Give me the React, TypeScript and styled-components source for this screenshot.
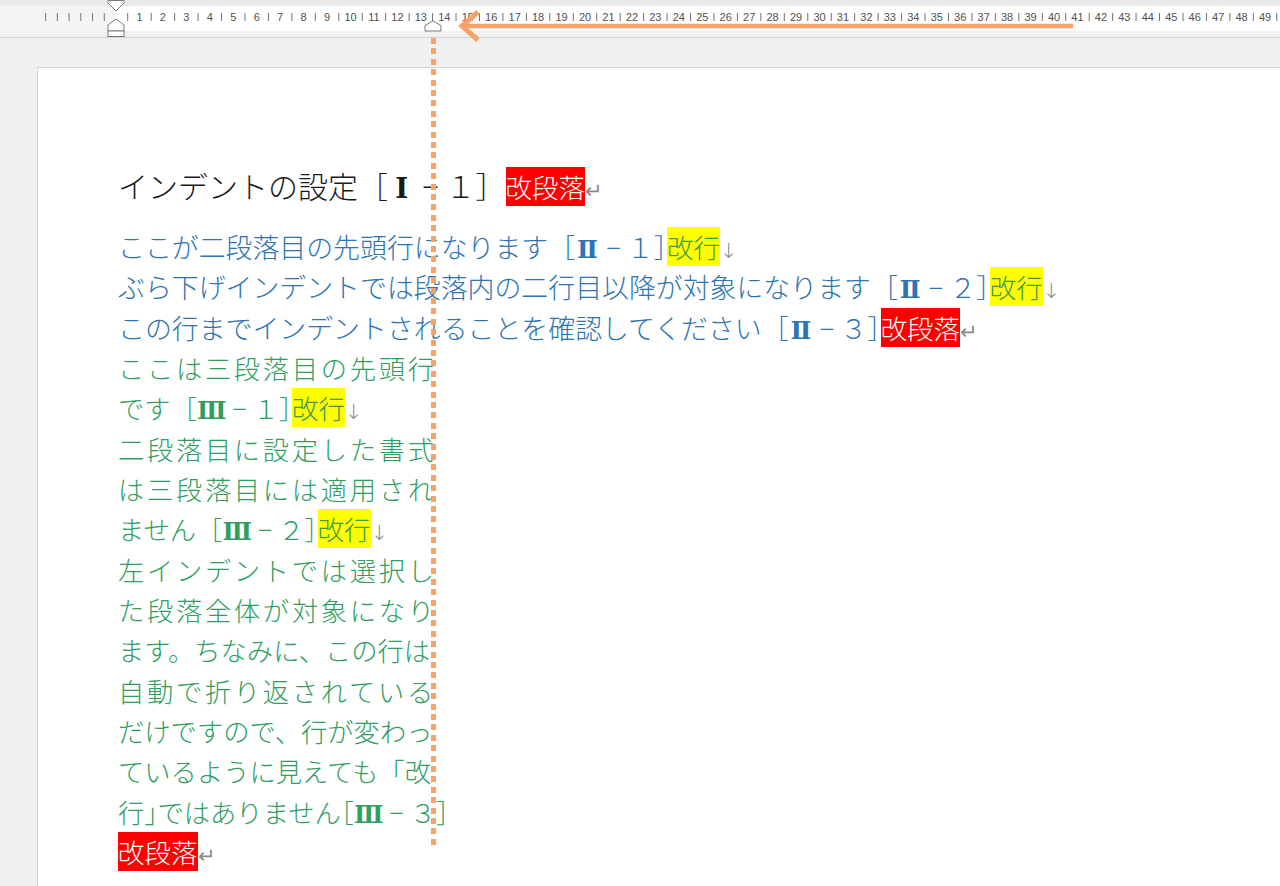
import styled, { createGlobalStyle } from "styled-components";

const ORIGIN = 116;
const UNIT = 23.45;
const ORANGE = "#f6a368";
const BLUE = "#2e74b5";
const GREEN = "#2f9e5f";

const GlobalStyle = createGlobalStyle`
  html, body {
    margin: 0;
    padding: 0;
    background: #f0f0f0;
    overflow: hidden;
  }
  body {
    font-family: "Noto Sans CJK JP", "Noto Sans", sans-serif;
  }
`;

const Frame = styled.div`
  position: relative;
  width: 1280px;
  height: 886px;
  overflow: hidden;
  background: #f0f0f0;
`;

const RulerBar = styled.div`
  height: 37px;
  border-bottom: 1px solid #d2d2d2;

  svg {
    display: block;
  }
`;

const Page = styled.div`
  margin: 29px 0 0 37px;
  min-height: 900px;
  background: #fff;
  border: 1px solid #d4d4d4;
  border-right: none;
  padding: 95px 0 0 80px;
  font-family: "Noto Sans CJK JP", "DejaVu Sans", sans-serif;
  font-weight: 300;
`;

const Heading = styled.div`
  font-size: 30px;
  height: 44px;
  line-height: 44px;
  color: #1b1b1b;
  white-space: nowrap;
  margin-bottom: 20px;
`;

const Line = styled.div<{ $size: number; $color: string; $spread?: number }>`
  font-size: ${(p) => p.$size}px;
  height: 40.33px;
  line-height: 40.33px;
  color: ${(p) => p.$color};
  letter-spacing: ${(p) => p.$spread ?? 0}px;
  white-space: nowrap;
`;

const Highlight = styled.span<{ $tone: "red" | "yellow" }>`
  background: ${(p) => (p.$tone === "red" ? "#ff0000" : "#ffff00")};
  color: ${(p) => (p.$tone === "red" ? "#ffffff" : "#3c9a48")};
  font-size: 26.5px;
  line-height: 1;
  letter-spacing: 0;
`;

const Mark = styled.span`
  font-family: "DejaVu Sans", sans-serif;
  font-size: 21px;
  line-height: 1;
  color: #8a8a8a;
  letter-spacing: 0;
`;

const Half = styled.span`
  font-feature-settings: "halt";
`;

const Cell = styled.span<{ $roman?: boolean }>`
  display: inline-block;
  min-width: 1em;
  text-align: center;
  line-height: 1;
  font-family: ${(p) =>
    p.$roman
      ? `"DejaVu Serif", "Noto Sans CJK JP", serif`
      : `"Noto Sans CJK JP", "DejaVu Sans", sans-serif`};
  font-weight: ${(p) => (p.$roman ? 700 : 300)};
  font-size: ${(p) => (p.$roman ? "0.92em" : "1em")};
`;

const IndentGuide = styled.div`
  position: absolute;
  left: 431px;
  top: 38px;
  width: 5px;
  height: 808px;
  background: repeating-linear-gradient(
    to bottom,
    ${ORANGE} 0,
    ${ORANGE} 6px,
    transparent 6px,
    transparent 10.4px
  );
`;

const ArrowLayer = styled.svg`
  position: absolute;
  left: 0;
  top: 0;
  pointer-events: none;
`;

const Ruler = () => {
  const numbers = Array.from({ length: 49 }, (_, i) => i + 1);
  const halves = Array.from({ length: 50 }, (_, i) => ORIGIN + (i + 0.5) * UNIT);
  const marginTicks = Array.from({ length: 6 }, (_, i) => ORIGIN - (i + 1) * (UNIT / 2));

  return (
    <svg width="1280" height="37" viewBox="0 0 1280 37">
      <rect x="0" y="0" width="1280" height="37" fill="#ebebeb" />
      <rect x="0" y="6" width="1280" height="25" fill="#ffffff" />
      <rect x="0" y="6" width={ORIGIN} height="25" fill="#f4f4f4" />
      <rect x="0" y="31" width="1280" height="6" fill="#f0f0f0" />

      {[...marginTicks, ...halves].map((x) => (
        <line key={x} x1={x} x2={x} y1="13" y2="21" stroke="#6f6f6f" strokeWidth="1" />
      ))}
      {numbers.map((n) => (
        <text
          key={n}
          x={ORIGIN + n * UNIT}
          y="21"
          fontSize="11"
          fontFamily="Liberation Sans, Arial, sans-serif"
          fill="#505050"
          textAnchor="middle"
        >
          {n}
        </text>
      ))}

      {/* first line / hanging / left indent */}
      <path d="M108 0.5 H124 V3 L116 11 L108 3 Z" fill="#fff" stroke="#7a7a7a" />
      <path d="M116 19 L124 25 V31 H108 V25 Z" fill="#fff" stroke="#7a7a7a" />
      <rect x="108" y="31" width="16" height="5.5" fill="#fff" stroke="#7a7a7a" />

      {/* right indent */}
      <path d="M433 21 L441 25.5 V31 H425 V25.5 Z" fill="#fff" stroke="#7a7a7a" />
    </svg>
  );
};

const Arrow = () => (
  <ArrowLayer width="1280" height="50" viewBox="0 0 1280 50">
    <line x1="466" y1="26" x2="1073" y2="26" stroke={ORANGE} strokeWidth="4.5" />
    <polyline
      points="478,12 462,26 478,40"
      fill="none"
      stroke={ORANGE}
      strokeWidth="5"
      strokeLinejoin="miter"
    />
  </ArrowLayer>
);

const Br = () => (
  <>
    <Highlight $tone="yellow">改行</Highlight>
    <Mark>↓</Mark>
  </>
);

const ParaEnd = () => (
  <>
    <Highlight $tone="red">改段落</Highlight>
    <Mark>↵</Mark>
  </>
);

const Ref = ({ num, sub, tight }: { num: string; sub: string; tight?: boolean }) => (
  <>
    {tight ? <Half>［</Half> : "［"}
    <Cell $roman>{num}</Cell>
    <Cell>−</Cell>
    {sub}
    <Half>］</Half>
  </>
);

export default function App() {
  const spread = 2.67;

  return (
    <Frame>
      <GlobalStyle />
      <RulerBar>
        <Ruler />
      </RulerBar>

      <Page>
        <Heading>
          インデントの設定［<Cell $roman>Ⅰ</Cell>
          <Cell>−</Cell>１］
          <ParaEnd />
        </Heading>

        <Line $size={26.9} $color={BLUE}>
          ここが二段落目の先頭行になります
          <Ref num="Ⅱ" sub="１" />
          <Br />
        </Line>
        <Line $size={26.9} $color={BLUE}>
          ぶら下げインデントでは段落内の二行目以降が対象になります
          <Ref num="Ⅱ" sub="２" />
          <Br />
        </Line>
        <Line $size={26.9} $color={BLUE}>
          この行までインデントされることを確認してください
          <Ref num="Ⅱ" sub="３" />
          <ParaEnd />
        </Line>

        <Line $size={26.3} $color={GREEN} $spread={spread}>
          ここは三段落目の先頭行
        </Line>
        <Line $size={26.3} $color={GREEN}>
          です
          <Ref num="Ⅲ" sub="１" />
          <Br />
        </Line>
        <Line $size={26.3} $color={GREEN} $spread={spread}>
          二段落目に設定した書式
        </Line>
        <Line $size={26.3} $color={GREEN} $spread={spread}>
          は三段落目には適用され
        </Line>
        <Line $size={26.3} $color={GREEN}>
          ません
          <Ref num="Ⅲ" sub="２" />
          <Br />
        </Line>
        <Line $size={26.3} $color={GREEN} $spread={spread}>
          左インデントでは選択し
        </Line>
        <Line $size={26.3} $color={GREEN} $spread={spread}>
          た段落全体が対象になり
        </Line>
        <Line $size={26.3} $color={GREEN}>
          ます。ちなみに、この行は
        </Line>
        <Line $size={26.3} $color={GREEN} $spread={spread}>
          自動で折り返されている
        </Line>
        <Line $size={26.3} $color={GREEN}>
          だけですので、行が変わっ
        </Line>
        <Line $size={26.3} $color={GREEN}>
          ているように見えても「改
        </Line>
        <Line $size={26.3} $color={GREEN}>
          行<Half>」</Half>ではありません
          <Ref num="Ⅲ" sub="３" tight />
        </Line>
        <Line $size={26.3} $color={GREEN}>
          <ParaEnd />
        </Line>
      </Page>

      <IndentGuide />
      <Arrow />
    </Frame>
  );
}
